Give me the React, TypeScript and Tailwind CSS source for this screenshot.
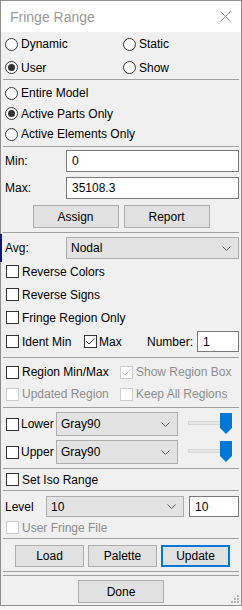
import React from "react";

const Radio = ({ checked, label }: { checked?: boolean; label: string }) => (
  <div className="flex items-center">
    <span className="w-[13px] h-[13px] rounded-full border border-[#333] bg-white flex items-center justify-center shrink-0">
      {checked && <span className="w-[7px] h-[7px] rounded-full bg-[#333]" />}
    </span>
    <span className="ml-[3px]">{label}</span>
  </div>
);

const Check = ({
  checked,
  disabled,
  label,
  gap = "ml-[3px]",
}: {
  checked?: boolean;
  disabled?: boolean;
  label?: string;
  gap?: string;
}) => (
  <div className="flex items-center">
    <span
      className={
        "w-[13px] h-[13px] border bg-white flex items-center justify-center shrink-0 " +
        (disabled ? "border-[#cccccc]" : "border-[#333]")
      }
    >
      {checked && (
        <svg width="11" height="11" viewBox="0 0 11 11">
          <path
            d="M1.5 5.5 L4 8 L9.5 2.5"
            fill="none"
            stroke={disabled ? "#bcbcbc" : "#333"}
            strokeWidth="1"
          />
        </svg>
      )}
    </span>
    {label && (
      <span className={gap + " " + (disabled ? "text-[#8d8d8d]" : "")}>{label}</span>
    )}
  </div>
);

const Chevron = () => (
  <svg width="9" height="5" viewBox="0 0 9 5" className="shrink-0">
    <path d="M0.5 0.5 L4.5 4.5 L8.5 0.5" fill="none" stroke="#555" strokeWidth="1" />
  </svg>
);

const Select = ({ value, cls }: { value: string; cls: string }) => (
  <div
    className={
      "flex items-center justify-between bg-[#e3e3e3] border border-[#adadad] pl-[4px] pr-[7px] " + cls
    }
  >
    <span>{value}</span>
    <Chevron />
  </div>
);

const Sep = ({ cls = "" }: { cls?: string }) => (
  <div className={"mx-[2px] h-px bg-[#a0a0a0] shrink-0 " + cls} />
);

const Btn = ({ label, cls, primary }: { label: string; cls: string; primary?: boolean }) => (
  <div
    className={
      "flex items-center justify-center bg-[#e1e1e1] " +
      (primary ? "border-2 border-[#0078d7] " : "border border-[#adadad] ") +
      cls
    }
  >
    {label}
  </div>
);

const Slider = () => (
  <div className="relative w-[46px] h-[24px] ml-[9px]">
    <div className="absolute left-[1px] top-[9px] w-[40px] h-[4px] bg-[#e7e7e7] border border-[#d6d6d6]" />
    <svg className="absolute left-[33px] top-[1px]" width="12" height="21" viewBox="0 0 12 21">
      <path d="M0 0 H12 V15 L6 21 L0 15 Z" fill="#0078d7" />
    </svg>
  </div>
);

export default function App() {
  return (
    <div
      className="relative w-[242px] h-[610px] bg-[#f7f7f7] text-[12px] text-black leading-none"
      style={{ fontFamily: '"Liberation Sans", Arial, sans-serif' }}
    >
      <div className="w-[242px] h-[606px] border border-[#8f8f8f] bg-[#f0f0f0] flex flex-col relative">
        {/* title bar */}
        <div className="h-[31px] bg-white flex items-center justify-between pl-[9px] pr-[10px] shrink-0">
          <span className="text-[14px] text-[#999999]">Fringe Range</span>
          <svg width="11" height="11" viewBox="0 0 11 11">
            <path d="M0.5 0.5 L10.5 10.5 M10.5 0.5 L0.5 10.5" stroke="#8a8a8a" strokeWidth="1" />
          </svg>
        </div>

        {/* radios */}
        <div className="flex items-center h-[24px] pl-[4px]">
          <div className="w-[118px]">
            <Radio label="Dynamic" />
          </div>
          <Radio label="Static" />
        </div>
        <div className="flex items-center h-[23px] pl-[4px]">
          <div className="w-[118px]">
            <Radio checked label="User" />
          </div>
          <Radio label="Show" />
        </div>
        <Sep />
        <div className="flex flex-col pl-[4px] pt-[3px]">
          <div className="h-[20px] flex items-center">
            <Radio label="Entire Model" />
          </div>
          <div className="h-[21px] flex items-center">
            <Radio checked label="Active Parts Only" />
          </div>
          <div className="h-[20px] flex items-center">
            <Radio label="Active Elements Only" />
          </div>
        </div>
        <Sep cls="mt-[2px]" />

        {/* min max */}
        <div className="flex items-center mt-[3px] pl-[4px]">
          <span className="w-[61px]">Min:</span>
          <div className="w-[173px] h-[22px] bg-white border border-[#7a7a7a] flex items-center pl-[5px]">0</div>
        </div>
        <div className="flex items-center mt-[5px] pl-[4px]">
          <span className="w-[61px]">Max:</span>
          <div className="w-[173px] h-[22px] bg-white border border-[#7a7a7a] flex items-center pl-[5px]">
            35108.3
          </div>
        </div>
        <div className="flex justify-center gap-[5px] mt-[6px]">
          <Btn label="Assign" cls="w-[86px] h-[23px]" />
          <Btn label="Report" cls="w-[86px] h-[23px]" />
        </div>
        <Sep cls="mt-[4px]" />

        {/* avg */}
        <div className="flex items-center mt-[4px] pl-[4px]">
          <span className="w-[61px]">Avg:</span>
          <Select value="Nodal" cls="w-[173px] h-[22px]" />
        </div>
        <div className="flex flex-col pl-[5px] mt-[1px]">
          <div className="h-[23px] flex items-center">
            <Check label="Reverse Colors" />
          </div>
          <div className="h-[23px] flex items-center">
            <Check label="Reverse Signs" />
          </div>
          <div className="h-[23px] flex items-center">
            <Check label="Fringe Region Only" />
          </div>
          <div className="h-[25px] flex items-center">
            <div className="w-[78px]">
              <Check label="Ident Min" />
            </div>
            <div className="w-[63px]">
              <Check checked label="Max" gap="ml-[2px]" />
            </div>
            <span className="w-[50px]">Number:</span>
            <div className="w-[42px] h-[21px] bg-white border border-[#7a7a7a] flex items-center pl-[5px]">1</div>
          </div>
        </div>
        <Sep cls="mt-[3px]" />

        {/* region */}
        <div className="flex flex-col pl-[5px] mt-[3px]">
          <div className="h-[22px] flex items-center">
            <div className="w-[114px]">
              <Check label="Region Min/Max" />
            </div>
            <Check checked disabled label="Show Region Box" />
          </div>
          <div className="h-[22px] flex items-center">
            <div className="w-[114px]">
              <Check disabled label="Updated Region" />
            </div>
            <Check disabled label="Keep All Regions" />
          </div>
        </div>
        <Sep cls="mt-[2px]" />

        {/* lower upper */}
        <div className="flex items-center mt-[4px] pl-[5px]">
          <div className="w-[50px]">
            <Check label="Lower" gap="ml-[2px]" />
          </div>
          <Select value="Gray90" cls="w-[122px] h-[24px]" />
          <Slider />
        </div>
        <div className="flex items-center mt-[4px] pl-[5px]">
          <div className="w-[50px]">
            <Check label="Upper" gap="ml-[2px]" />
          </div>
          <Select value="Gray90" cls="w-[122px] h-[24px]" />
          <Slider />
        </div>
        <Sep cls="mt-[4px]" />
        <div className="h-[21px] flex items-center pl-[5px]">
          <Check label="Set Iso Range" />
        </div>
        <Sep />

        {/* level */}
        <div className="flex items-center mt-[5px] pl-[4px]">
          <span className="w-[41px]">Level</span>
          <Select value="10" cls="w-[138px] h-[21px]" />
          <div className="ml-[5px] w-[50px] h-[21px] bg-white border border-[#7a7a7a] flex items-center pl-[5px]">
            10
          </div>
        </div>
        <div className="h-[21px] flex items-center pl-[5px]">
          <Check disabled label="User Fringe File" />
        </div>
        <Sep />
        <div className="flex gap-[4px] mt-[6px] pl-[14px]">
          <Btn label="Load" cls="w-[69px] h-[22px]" />
          <Btn label="Palette" cls="w-[69px] h-[22px]" />
          <Btn label="Update" cls="w-[69px] h-[22px]" primary />
        </div>
        <Sep cls="mt-[4px]" />
        <Sep cls="mt-[3px]" />
        <div className="flex justify-center mt-[4px]">
          <Btn label="Done" cls="w-[86px] h-[23px]" />
        </div>

        {/* resize grip */}
        <svg className="absolute right-[1px] bottom-[1px]" width="10" height="10" viewBox="0 0 10 10">
          <rect x="7" y="1" width="2" height="2" fill="#b5b5b5" />
          <rect x="4" y="4" width="2" height="2" fill="#b5b5b5" />
          <rect x="7" y="4" width="2" height="2" fill="#b5b5b5" />
          <rect x="1" y="7" width="2" height="2" fill="#b5b5b5" />
          <rect x="4" y="7" width="2" height="2" fill="#b5b5b5" />
          <rect x="7" y="7" width="2" height="2" fill="#b5b5b5" />
        </svg>
      </div>
      {/* navy strip from background window */}
      <div className="absolute left-0 top-[234px] w-[2px] h-[28px] bg-[#0a1a6e]" />
    </div>
  );
}
